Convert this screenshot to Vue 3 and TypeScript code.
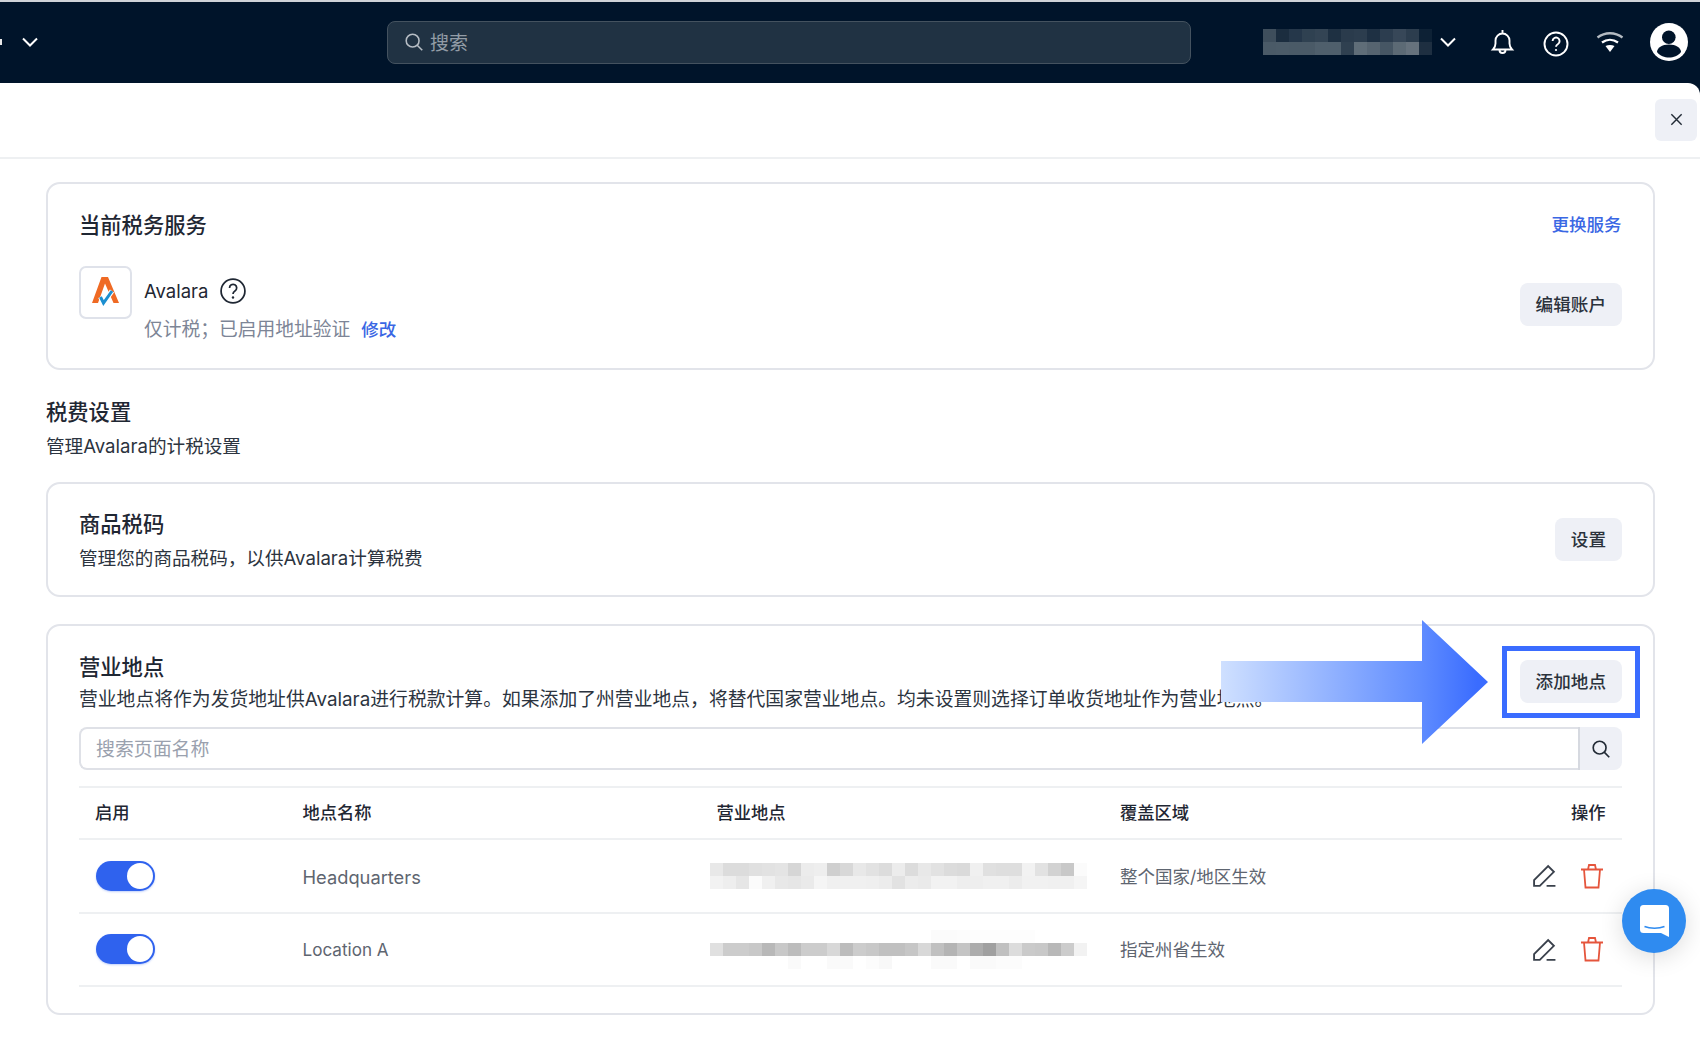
<script setup lang="ts">
interface Place { name: string; area: string; lines: string[][] }

const toGrey = (s: string): string[] => s.split(' ').map((v) => `#${v}${v}${v}`)
const toHex = (s: string): string[] => s.split(' ').map((v) => `#${v}`)

const topLines: string[][] = [
  '3e4e5c 1b2d3f 25374a 2f4151 334454 1e3042 2a3b4c 2c3d4e 1e3043 2c3d4f 374758 2c3d4e 0d2135',
  '4a5a67 4b5b68 4a5a67 4a5a67 4f5f6c 4f5f6c 2f4050 5f6d78 566470 465664 5c6a75 66727d 1e2f41',
].map(toHex)

const places: Place[] = [
  {
    name: 'Headquarters',
    area: '整个国家/地区生效',
    lines: [
      'e8 dc dc e0 e2 e4 d6 ec ee cf d8 e8 e2 dc ec dc e8 e2 dc da f0 e0 de de f2 e2 d2 c8 fb',
      'f2 ee e6 fb f0 e8 e6 ea f5 f0 f0 f0 ef ec e2 ec ea f2 f2 ee ee f0 f0 ec f1 f1 f0 f0 f5',
    ].map(toGrey),
  },
  {
    name: 'Location A',
    area: '指定州省生效',
    lines: [
      'ff ff ff ff ff ff ff ff ff ff ff ff ff ff ff ff ff fb fb fc fd fd fd fd fd ff ff ff ff',
      'e0 cc cc c8 b8 c8 bc cc cc d8 bc cc c8 c0 c0 c6 d8 c0 b4 c4 ac a0 c0 dc ca c8 b8 cc f2',
      'ff ff ff ff ff ff fa ff ff fa fa ff fc f8 ff ff ff fa fa ff fa fa fc fc ff ff ff ff ff',
    ].map(toGrey),
  },
]
</script>

<template>
  <div class="page">
    <header class="topbar">
      <div class="left">
        <span class="stub"></span>
        <svg class="chev" viewBox="0 0 20 20"><path d="M3 6.500 10 13.500 17 6.500" /></svg>
      </div>
      <div class="search">
        <svg class="search-ic" viewBox="0 0 24 24"><circle cx="10.500" cy="10.500" r="7" /><path d="M15.500 15.500 21 21" /></svg>
        <span class="search-text">搜索</span>
      </div>
      <div class="right">
        <div class="mosaic">
          <div v-for="(line, i) in topLines" :key="i" class="mline">
            <i v-for="(c, j) in line" :key="j" :style="{ background: c }"></i>
          </div>
        </div>
        <svg class="chev" viewBox="0 0 20 20"><path d="M3 6.500 10 13.500 17 6.500" /></svg>
        <svg class="tb-ic" viewBox="0 0 28 28"><path d="M14.500 2v2.500M5 21.500c1.800-1.800 2.500-3.500 2.500-6v-3a7 7 0 0 1 14 0v3c0 2.500.7 4.200 2.500 6ZM11.500 22a3 3 0 0 0 6 0" /></svg>
        <svg class="tb-ic help" viewBox="0 0 28 28"><circle cx="14" cy="14" r="11.500" /><path d="M10.600 11a3.500 3.500 0 1 1 5.400 3c-1.300.8-2 1.400-2 2.800" /><circle class="dot" cx="14" cy="20" r="1.100" /></svg>
        <svg class="tb-ic wifi" viewBox="0 0 28 28"><path class="arc-top" d="M1.500 9.500C9 3.800 19 3.800 26.500 9.500" /><path d="M6 14.500c4.800-3.500 11-3.500 16 0" /><path class="fan" d="M9.500 18c2.800-1.500 6.200-1.500 9 0L14 24Z" /></svg>
        <svg class="avatar" viewBox="0 0 38 38"><circle class="av-bg" cx="19" cy="19" r="19" /><circle class="av-fill" cx="18.800" cy="14.300" r="6.800" /><path class="av-fill" d="M7 29c0-4 5-7.500 12-7.500s12 3.500 12 7.500c-3 4-7.500 5.500-12 5.500S10 33 7 29Z" /></svg>
      </div>
    </header>

    <main class="panel">
      <div class="panel-head">
        <button class="close" type="button" aria-label="关闭">
          <svg viewBox="0 0 16 16"><path d="M2.500 2.500 13.500 13.500M13.500 2.500 2.500 13.500" /></svg>
        </button>
      </div>

      <div class="content">
        <section class="card card-service">
          <div class="row-between title-row">
            <h2>当前税务服务</h2>
            <a class="link top-link">更换服务</a>
          </div>
          <div class="service">
            <div class="logo">
              <svg viewBox="0 0 49 49">
                <path fill="#ef6a24" d="M20.500 9H27L38 35h-5.500L24 15.500 17 35h-6Z" />
                <path fill="none" stroke="#fff" stroke-width="5" d="M19.500 29 22.500 35 31 23" />
                <path fill="none" stroke="#1c8fd0" stroke-width="3" d="M19.500 29 22.500 35 31 23" />
              </svg>
            </div>
            <div class="service-text">
              <div class="service-name">
                <span>Avalara</span>
                <svg class="q" viewBox="0 0 24 24"><circle cx="12" cy="12" r="11" /><path d="M8.800 9.200a3.300 3.300 0 1 1 5 2.800c-1.300.8-1.800 1.400-1.800 2.800" /><circle class="dot" cx="12" cy="18" r="1.100" /></svg>
              </div>
              <div class="service-sub">仅计税；已启用地址验证<a class="link sm">修改</a></div>
            </div>
            <button class="btn" type="button">编辑账户</button>
          </div>
        </section>

        <section class="settings-head">
          <h2>税费设置</h2>
          <p>管理Avalara的计税设置</p>
        </section>

        <section class="card card-code">
          <div class="code-text">
            <h2>商品税码</h2>
            <p>管理您的商品税码，以供Avalara计算税费</p>
          </div>
          <button class="btn" type="button">设置</button>
        </section>

        <section class="card card-places">
          <div class="places-head">
            <div>
              <h2>营业地点</h2>
              <p class="long">营业地点将作为发货地址供Avalara进行税款计算。如果添加了州营业地点，将替代国家营业地点。均未设置则选择订单收货地址作为营业地点。</p>
            </div>
            <button class="btn" type="button">添加地点</button>
          </div>
          <div class="filter">
            <div class="filter-input">搜索页面名称</div>
            <button class="filter-btn" type="button" aria-label="搜索">
              <svg viewBox="0 0 24 24"><circle cx="10.500" cy="10.500" r="7" /><path d="M15.500 15.500 21 21" /></svg>
            </button>
          </div>
          <div class="table">
            <div class="tr th">
              <span>启用</span><span>地点名称</span><span>营业地点</span><span>覆盖区域</span><span class="act-h">操作</span>
            </div>
            <div v-for="p in places" :key="p.name" class="tr td">
              <span class="toggle"><i></i></span>
              <span class="name">{{ p.name }}</span>
              <div class="blur">
                <div v-for="(line, i) in p.lines" :key="i" class="mline">
                  <i v-for="(c, j) in line" :key="j" :style="{ background: c }"></i>
                </div>
              </div>
              <span class="area">{{ p.area }}</span>
              <div class="acts">
                <svg class="edit" viewBox="0 0 24 24"><path d="M2 22v-5.500L15.500 3l5.500 5.500L7.500 22ZM14 22h8.500" /></svg>
                <svg class="trash" viewBox="0 0 24 26"><path d="M1 6.500h22M4 6.500 5.500 24.500h13L20 6.500M8 6.500 9 2h6l1 4.500" /></svg>
              </div>
            </div>
          </div>

          <div class="hl"></div>
          <svg class="arrow" viewBox="0 0 268 124">
            <defs>
              <linearGradient id="arrow-g" x1="0" x2="1" y1="0" y2="0">
                <stop offset="0" stop-color="#cfe0ff" />
                <stop offset="0.75" stop-color="#5f8cff" />
                <stop offset="0.96" stop-color="#3a6cff" />
              </linearGradient>
            </defs>
            <path fill="url(#arrow-g)" d="M1 41H202V0L268 62 202 124V82H1Z" />
          </svg>
        </section>
      </div>
    </main>

    <button class="chat" type="button" aria-label="客服">
      <svg viewBox="0 0 29 32"><path class="bub" d="M3.500 0h22A3.500 3.500 0 0 1 29 3.500V32l-8-4H3.500A3.500 3.500 0 0 1 0 24.500v-21A3.500 3.500 0 0 1 3.500 0Z" /><path class="smile" d="M4.500 21.500c5.500 2.300 14.500 2.300 20 0" /></svg>
    </button>
  </div>
</template>

<style scoped>
.page {
  position: relative;
  width: 1700px;
  height: 1038px;
  overflow: hidden;
  background: #00142a;
  font-family: Inter, "Noto Sans CJK SC", sans-serif;
  color: #1f2733;
}
.topbar {
  height: 80.500px;
  border-top: 2px solid #cfd3d8;
  display: flex;
  align-items: center;
  background: #00142a;
}
.left {
  width: 387px;
  display: flex;
  align-items: center;
  gap: 18px;
}
.stub {
  width: 2px;
  height: 6px;
  background: #e8e8e8;
}
.chev {
  width: 20px;
  height: 20px;
  flex: none;
  fill: none;
  stroke: #fff;
  stroke-width: 2;
}
.search {
  width: 804px;
  height: 43px;
  box-sizing: border-box;
  display: flex;
  align-items: center;
  gap: 5px;
  padding-left: 15px;
  border: 1px solid #44525f;
  border-radius: 8px;
  background: #203243;
  color: #929ca6;
  font-size: 19px;
}
.search-text {
  padding-bottom: 2px;
}
.search-ic {
  width: 22px;
  height: 22px;
  fill: none;
  stroke: #b6bdc4;
  stroke-width: 1.700;
}
.right {
  flex: 1;
  display: flex;
  align-items: center;
  padding-left: 72px;
}
.mosaic {
  width: 167px;
  margin-right: 8px;
}
.mline {
  display: flex;
}
.mline i {
  display: block;
  width: 13px;
  height: 13px;
  flex: none;
}
.right .chev {
  margin-right: 30px;
}
.tb-ic {
  width: 28px;
  height: 28px;
  margin-right: 26px;
  fill: none;
  stroke: #fff;
  stroke-width: 1.900;
}
.help {
  margin-top: 3px;
}
.tb-ic .dot,
.q .dot {
  stroke: none;
}
.tb-ic .dot {
  fill: #fff;
}
.q .dot {
  fill: #1f2733;
}
.wifi {
  stroke-width: 2.300;
}
.wifi .arc-top {
  stroke: #b4bbc2;
}
.wifi .fan {
  fill: #fff;
  stroke: none;
}
.avatar {
  width: 38px;
  height: 38px;
  flex: none;
}
.av-bg {
  fill: #fff;
}
.av-fill {
  fill: #00142a;
}
.panel {
  height: 955.500px;
  background: #fff;
  border-radius: 0 12px 0 0;
}
.panel-head {
  height: 58.500px;
  border-bottom: 2px solid #eef0f2;
  display: flex;
  justify-content: flex-end;
  padding: 16px 3px 0 0;
}
.close {
  width: 42px;
  height: 42px;
  border: 0;
  border-radius: 6px;
  background: #eef0f6;
  display: flex;
  align-items: center;
  justify-content: center;
  padding: 0;
}
.close svg {
  width: 15px;
  height: 15px;
  fill: none;
  stroke: #222b36;
  stroke-width: 1.500;
}
.content {
  padding: 23px 45.500px 0 46px;
}
h2 {
  margin: 0;
  font-size: 21.300px;
  font-weight: 500;
  line-height: 30px;
  color: #1f2733;
}
p {
  margin: 0;
  font-size: 18.600px;
  line-height: 30px;
  color: #2c3440;
}
p.long {
  font-size: 18.820px;
}
.card {
  box-sizing: border-box;
  position: relative;
  border: 2px solid #e2e4ea;
  border-radius: 14px;
  background: #fff;
  padding: 0 31px;
}
.row-between {
  display: flex;
  justify-content: space-between;
  align-items: center;
}
.card-service {
  height: 187.500px;
  padding-top: 26px;
}
.link {
  color: #3a67e4;
  font-size: 17.500px;
  font-weight: 500;
}
.top-link {
  margin-bottom: 4px;
}
.link.sm {
  margin-left: 11px;
}
.service {
  display: flex;
  margin-top: 26px;
  position: relative;
}
.logo {
  width: 53px;
  height: 53px;
  box-sizing: border-box;
  border: 2px solid #dfe2ea;
  border-radius: 7px;
  flex: none;
}
.logo svg {
  display: block;
  width: 49px;
  height: 49px;
}
.service-text {
  margin-left: 12px;
  flex: 1;
}
.service-name {
  display: flex;
  align-items: center;
  gap: 12px;
  font-size: 18.500px;
  height: 50px;
  color: #1f2733;
}
.q {
  width: 26px;
  height: 26px;
  fill: none;
  stroke: #1f2733;
  stroke-width: 1.600;
}
.service-sub {
  padding-top: 1px;
  font-size: 18.750px;
  line-height: 26px;
  color: #7d8596;
}
.btn {
  height: 43px;
  padding: 0 15.500px 2px;
  border: 0;
  border-radius: 8px;
  background: #eef0f6;
  color: #2b323c;
  font-family: inherit;
  font-size: 17.600px;
  font-weight: 500;
  flex: none;
}
.service .btn {
  margin-top: 17px;
}
.settings-head {
  padding-top: 27.500px;
  height: 84.500px;
}
.settings-head p {
  margin-top: 4px;
}
.card-code {
  height: 115px;
  display: flex;
  justify-content: space-between;
  align-items: center;
}
.code-text {
  padding-top: 4px;
}
.code-text p {
  margin-top: 4px;
}
.card-places {
  margin-top: 27px;
  height: 391px;
}
.places-head {
  display: flex;
  justify-content: space-between;
  height: 101.700px;
  padding-top: 26.500px;
  box-sizing: border-box;
}
.places-head p {
  margin-top: 3px;
  white-space: nowrap;
}
.places-head .btn {
  margin-top: 7.500px;
}
.filter {
  display: flex;
  height: 43px;
}
.filter-input {
  flex: 1;
  box-sizing: border-box;
  border: 2px solid #dfe1e7;
  border-right: 0;
  border-radius: 8px 0 0 8px;
  padding-left: 15px;
  line-height: 42px;
  font-size: 18.900px;
  color: #9aa1ae;
}
.filter-btn {
  width: 44px;
  border: 0;
  padding: 0;
  border-left: 2px solid #d6d9e0;
  border-radius: 0 8px 8px 0;
  background: #eef0f6;
  display: flex;
  align-items: center;
  justify-content: center;
}
.filter-btn svg {
  width: 22px;
  height: 22px;
  fill: none;
  stroke: #222b36;
  stroke-width: 1.800;
}
.table {
  margin-top: 16px;
  border-top: 2px solid #eef0f2;
}
.tr {
  display: grid;
  grid-template-columns: 207.500px 414px 403.500px 1fr 90px;
  align-items: center;
  box-sizing: border-box;
  border-bottom: 2px solid #eef0f2;
  padding-left: 16px;
}
.th {
  height: 52px;
  padding-bottom: 4px;
  font-size: 17.300px;
  font-weight: 500;
  color: #1f2733;
}
.td {
  height: 73.500px;
  font-size: 17.500px;
  color: #5e6570;
}
.td:nth-child(2) .name {
  padding-top: 3px;
  font-size: 18.300px;
}
.td:nth-child(3) .name {
  font-size: 17.100px;
}
.td:nth-child(3) .area {
  padding-bottom: 2px;
}
.act-h {
  text-align: right;
  padding-right: 16px;
}
.toggle {
  width: 59px;
  height: 30px;
  margin-left: 1px;
  border-radius: 15px;
  background: #2f62ee;
  display: flex;
  align-items: center;
  justify-content: flex-end;
  padding-right: 2px;
  box-sizing: border-box;
  box-shadow: 0 1px 2px rgba(47, 98, 238, 0.3);
}
.toggle i {
  display: block;
  width: 26px;
  height: 26px;
  border-radius: 50%;
  background: #fff;
}
.blur {
  margin-left: -7px;
  width: 377px;
}
.acts {
  display: flex;
  justify-content: flex-end;
  align-items: center;
  gap: 23px;
  padding-right: 18px;
}
.edit {
  width: 25px;
  height: 25px;
  fill: none;
  stroke: #3a414c;
  stroke-width: 1.800;
}
.trash {
  width: 24px;
  height: 26px;
  fill: none;
  stroke: #e5553c;
  stroke-width: 1.800;
}
.hl {
  position: absolute;
  left: 1454px;
  top: 20px;
  width: 138px;
  height: 72px;
  box-sizing: border-box;
  border: 5.500px solid #3a6cff;
}
.arrow {
  position: absolute;
  left: 1172px;
  top: -6px;
  width: 268px;
  height: 124px;
}
.chat {
  position: absolute;
  left: 1622px;
  top: 889px;
  width: 64px;
  height: 64px;
  border: 0;
  padding: 0;
  border-radius: 50%;
  background: #2f8bf0;
  box-shadow: 0 4px 24px rgba(0, 0, 0, 0.14);
  display: flex;
  align-items: center;
  justify-content: center;
}
.chat svg {
  width: 29px;
  height: 32px;
}
.bub {
  fill: #fff;
}
.smile {
  fill: none;
  stroke: #2f8bf0;
  stroke-width: 1.600;
}
</style>

<style>
html,
body {
  margin: 0;
  background: #fff;
}
</style>
